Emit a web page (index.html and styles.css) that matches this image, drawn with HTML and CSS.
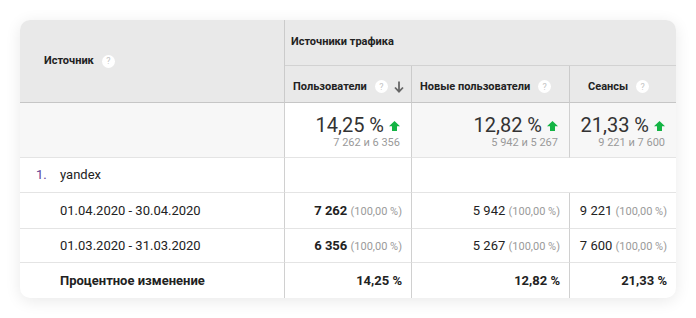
FILE: index.html
```html
<!DOCTYPE html>
<html lang="ru">
<head>
<meta charset="utf-8">
<link rel="stylesheet" href="styles.css">
</head>
<body>
<div class="card">
<table class="report">
  <colgroup>
    <col class="c1"><col class="c2"><col class="c3"><col class="c4">
  </colgroup>
  <tr class="hrow1">
    <th rowspan="2" class="src"><span class="lbl">Источник</span><span class="help">?</span></th>
    <th colspan="3" class="group">Источники трафика</th>
  </tr>
  <tr class="hrow2">
    <th class="sub first"><div class="subin"><span class="lbl">Пользователи</span><span class="help">?</span><svg class="sort" width="10" height="12" viewBox="0 0 10 12"><path d="M5 0.5v10M1 6.5l4 4.2 4-4.2" fill="none" stroke="#666" stroke-width="1.8"/></svg></div></th>
    <th class="sub"><div class="subin"><span class="lbl">Новые пользователи</span><span class="help">?</span></div></th>
    <th class="sub last"><div class="subin"><span class="lbl">Сеансы</span><span class="help">?</span></div></th>
  </tr>
  <tr class="totals">
    <td class="name"></td>
    <td class="tot sorted"><div class="big">14,25 %<svg class="up" width="11" height="10" viewBox="0 0 11 10"><path d="M5.5 0L11 5.2H8V10H3V5.2H0z" fill="#14b444"/></svg></div><div class="small">7 262 и 6 356</div></td>
    <td class="tot"><div class="big">12,82 %<svg class="up" width="11" height="10" viewBox="0 0 11 10"><path d="M5.5 0L11 5.2H8V10H3V5.2H0z" fill="#14b444"/></svg></div><div class="small">5 942 и 5 267</div></td>
    <td class="tot"><div class="big">21,33 %<svg class="up" width="11" height="10" viewBox="0 0 11 10"><path d="M5.5 0L11 5.2H8V10H3V5.2H0z" fill="#14b444"/></svg></div><div class="small">9 221 и 7 600</div></td>
  </tr>
  <tr class="rsrc">
    <td class="name"><span class="num">1.</span>yandex</td>
    <td class="val"></td>
    <td class="val" colspan="2"></td>
  </tr>
  <tr class="rd1">
    <td class="name ind">01.04.2020 - 30.04.2020</td>
    <td class="val"><b>7 262</b> <span class="pct">(100,00 %)</span></td>
    <td class="val">5 942 <span class="pct">(100,00 %)</span></td>
    <td class="val">9 221 <span class="pct">(100,00 %)</span></td>
  </tr>
  <tr class="rd2">
    <td class="name ind">01.03.2020 - 31.03.2020</td>
    <td class="val"><b>6 356</b> <span class="pct">(100,00 %)</span></td>
    <td class="val">5 267 <span class="pct">(100,00 %)</span></td>
    <td class="val">7 600 <span class="pct">(100,00 %)</span></td>
  </tr>
  <tr class="rlast">
    <td class="name ind bold">Процентное изменение</td>
    <td class="val bold">14,25 %</td>
    <td class="val bold">12,82 %</td>
    <td class="val bold">21,33 %</td>
  </tr>
</table>
</div>
</body>
</html>
```

FILE: styles.css
```css
* { box-sizing: border-box; }
html, body { margin: 0; padding: 0; background: #fff; }
body {
  font-family: Roboto, "Liberation Sans", Arial, sans-serif;
  color: #222;
  padding: 20px;
}
.card {
  width: 656px;
  border-radius: 10px;
  overflow: hidden;
  box-shadow: 0 3px 16px rgba(0,0,0,0.09);
  background: #fff;
}
.report {
  width: 656px;
  border-collapse: separate;
  border-spacing: 0;
  table-layout: fixed;
}
.c1 { width: 265px; }
.c2 { width: 127px; }
.c3 { width: 158px; }
.c4 { width: 106px; }

th {
  background: #e9e9e9;
  font-size: 11px;
  font-weight: 700;
  color: #222;
  text-align: left;
  padding: 0;
}
.hrow1 { height: 46px; }
.hrow2 { height: 37px; }
.src {
  padding-left: 24px;
  border-right: 1px solid #cbcbcb;
  border-bottom: 1px solid #c6c6c6;
  vertical-align: middle;
}
.group {
  padding-left: 6px;
  padding-bottom: 3px;
  border-bottom: 1px solid #d2d2d2;
  vertical-align: middle;
}
.sub {
  border-bottom: 1px solid #c6c6c6;
  vertical-align: middle;
  padding-top: 5px;
}
.sub.first { padding-left: 8px; padding-right: 7px; border-right: 1px solid #cbcbcb; }
.sub:nth-child(2) { padding-left: 8px; border-right: 1px solid #cbcbcb; }
.sub.last { padding-left: 18px; }
.subin { display: flex; align-items: center; }
.help {
  display: inline-flex;
  align-items: center;
  justify-content: center;
  width: 13px;
  height: 13px;
  margin-left: 8px;
  border-radius: 50%;
  background: #fff;
  color: #c4c4c4;
  font-size: 9px;
  font-weight: 400;
}
.sort { margin-left: auto; }

td {
  padding: 0;
  font-size: 13px;
  border-bottom: 1px solid #e4e4e4;
  vertical-align: middle;
}
td:not(:last-child) { border-right: 1px solid #d0d0d0; }
tr:last-child td { border-bottom: none; }

.totals { height: 55px; }
.totals td { background: #f7f7f7; }
.totals td.sorted { background: #fff; }
.tot { text-align: right; padding-right: 11px; }
.tot .big {
  font-size: 20px;
  color: #333;
  line-height: 22px;
  display: flex;
  justify-content: flex-end;
  align-items: center;
  padding-top: 3px;
}
.tot .up { margin-left: 5px; margin-top: 2px; }
.tot .small {
  font-size: 11px;
  color: #9a9a9a;
  line-height: 13px;
  margin-top: 0px;
}

.rsrc { height: 35px; }
.rd1 { height: 36px; }
.rd2 { height: 34px; }
.rlast { height: 35px; }
.rsrc td { padding-bottom: 1px; }

.name { padding-left: 16px; color: #222; }
.name.ind { padding-left: 40px; }
.num { color: #5e3e96; display: inline-block; width: 24px; }
.val { text-align: right; padding-right: 9px; }
.pct { font-size: 11px; color: #9a9a9a; }
.bold { font-weight: 700; }
.val b { font-weight: 700; }
```
